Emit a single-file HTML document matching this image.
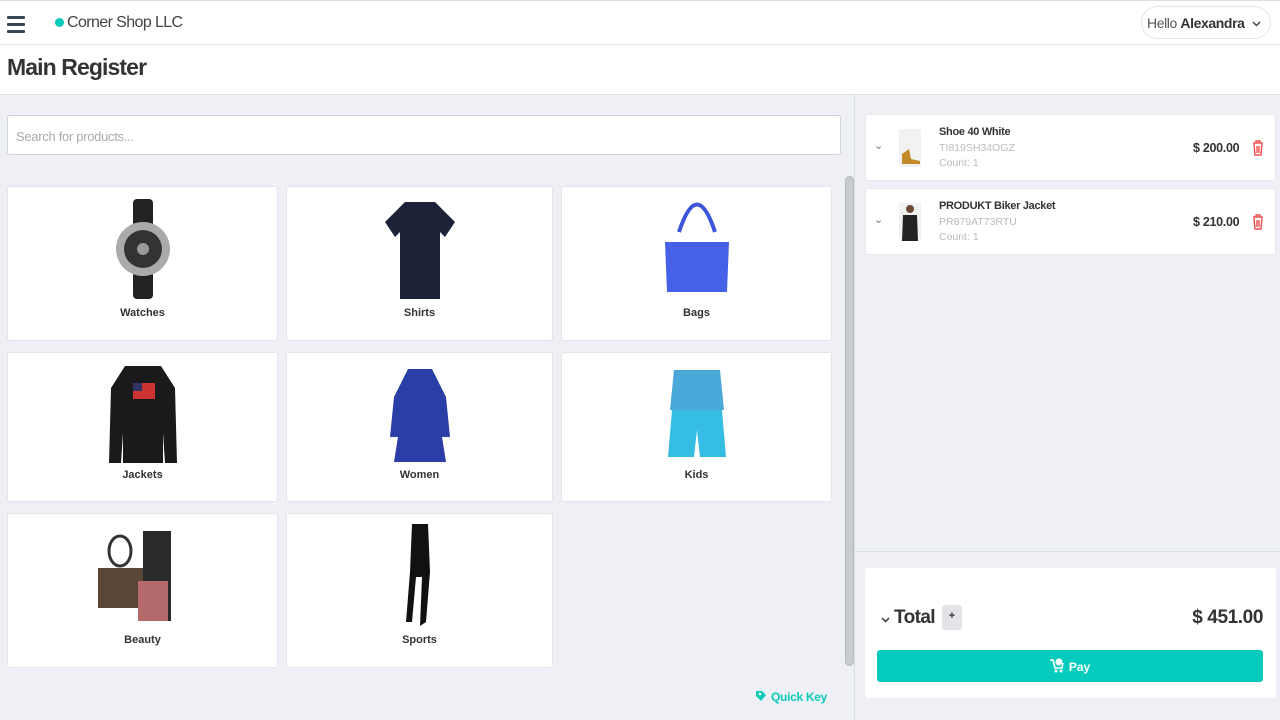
<!DOCTYPE html>
<html><head><meta charset="utf-8"><style>
*{box-sizing:border-box;margin:0;padding:0}
body{width:1280px;height:720px;overflow:hidden;background:#eef0f5;font-family:"Liberation Sans",sans-serif;color:#333;position:relative}
.top{position:absolute;left:0;top:0;width:1280px;height:45px;background:#fff;border-top:1px solid #ddd;border-bottom:1px solid #e2e4e8}
.ham{position:absolute;left:7px;top:15px;width:18px}
.ham i{display:block;height:3px;background:#3a4650;margin-bottom:4px;border-radius:1px}
.dot{position:absolute;left:55px;top:17px;width:9px;height:9px;border-radius:50%;background:#0ccab9}
.shop{position:absolute;left:67px;top:13px;font-size:16px;color:#444;letter-spacing:-.6px}
.hello{position:absolute;left:1141px;top:5px;width:130px;height:33px;border:1px solid #e2e4e8;border-radius:17px;font-size:14px;padding:8px 0 0 5px;color:#555;white-space:nowrap;letter-spacing:-.4px}
.hello b{color:#333}
.title{position:absolute;left:0;top:45px;width:1280px;height:50px;background:#fff;border-bottom:1px solid #dfe2e7}
.title h1{position:absolute;left:7px;top:9px;font-size:23px;font-weight:bold;color:#333;letter-spacing:-.9px}
.search{position:absolute;left:7px;top:115px;width:834px;height:40px;background:#fff;border:1px solid #cfd3da;border-radius:3px;font-size:13px;color:#aaa;padding:13px 8px;letter-spacing:-.3px}
.card{position:absolute;background:#fff;border:1px solid #e3e5ea;border-radius:3px}
.card span{position:absolute;left:0;right:0;text-align:center;font-size:11px;font-weight:bold;color:#333}
.card svg{position:absolute;left:50%;transform:translateX(-50%)}
.sb{position:absolute;left:845px;top:176px;width:9px;height:490px;background:#c8cbd0;border:1px solid #b5b8bd;border-radius:5px}
.div{position:absolute;left:854px;top:95px;width:1px;height:625px;background:#dcdfe4}
.qk{position:absolute;left:755px;top:690px;color:#0ccab9;font-size:12px;font-weight:bold;letter-spacing:-.3px}
.item{position:absolute;left:865px;width:411px;height:67px;background:#fff;border-radius:3px;border:1px solid #e6e8ec}
.item .nm{position:absolute;left:73px;top:11px;font-size:11px;font-weight:bold;color:#333;letter-spacing:-.3px}
.item .sk{position:absolute;left:73px;top:27px;font-size:10.5px;color:#bbb}
.item .ct{position:absolute;left:73px;top:42px;font-size:10.5px;color:#bbb}
.item .pr{position:absolute;left:327px;top:26px;font-size:12.5px;font-weight:bold;color:#333;letter-spacing:-.3px}
.item .ch{position:absolute;left:8px;top:24px;font-size:11px;color:#777}
.hr{position:absolute;left:855px;top:551px;width:425px;height:1px;background:#dcdfe4}
.tot{position:absolute;left:865px;top:568px;width:411px;height:130px;background:#fff;border-radius:3px}
.pay{position:absolute;left:12px;top:82px;width:386px;height:32px;background:#05cbbd;border-radius:3px;color:#fff;font-weight:bold;font-size:12px;text-align:center;padding-top:8px}
</style></head><body>
<div class="top"><div class="ham"><i></i><i></i><i></i></div><div class="dot"></div><div class="shop">Corner Shop LLC</div>
<div class="hello">Hello <b>Alexandra</b> <svg width="9" height="6" style="margin-left:4px;vertical-align:1px"><path d="M1 1l3.5 3.5L8 1" stroke="#444" stroke-width="1.5" fill="none"/></svg></div></div>
<div class="title"><h1>Main Register</h1></div>
<div class="search">Search for products...</div>

<div class="card" style="left:7px;top:186px;width:271px;height:155px"><svg style="top:12px" width="70" height="100"><rect x="25" y="0" width="20" height="100" rx="4" fill="#222"/><circle cx="35" cy="50" r="27" fill="#aaa"/><circle cx="35" cy="50" r="19" fill="#333"/><circle cx="35" cy="50" r="6" fill="#999"/></svg><span style="top:120px">Watches</span></div>
<div class="card" style="left:286px;top:186px;width:267px;height:155px"><svg style="top:10px" width="80" height="105"><path d="M25 5 L55 5 L75 25 L65 40 L60 35 L60 102 L20 102 L20 35 L15 40 L5 25 Z" fill="#1d2238"/></svg><span style="top:120px">Shirts</span></div>
<div class="card" style="left:561px;top:186px;width:271px;height:155px"><svg style="top:10px" width="80" height="100"><path d="M22 35 Q40 -20 58 35" stroke="#3b54d8" stroke-width="4" fill="none"/><path d="M8 45 L72 45 L70 95 L10 95 Z" fill="#4660e8"/></svg><span style="top:120px">Bags</span></div>
<div class="card" style="left:7px;top:352px;width:271px;height:150px"><svg style="top:10px" width="80" height="102"><path d="M22 3 L58 3 L72 25 L74 100 L62 100 L60 70 L60 100 L20 100 L20 70 L18 100 L6 100 L8 25 Z" fill="#1a1a1a"/><rect x="30" y="20" width="22" height="16" fill="#c33"/><rect x="30" y="20" width="9" height="8" fill="#336"/></svg><span style="top:116px">Jackets</span></div>
<div class="card" style="left:286px;top:352px;width:267px;height:150px"><svg style="top:14px" width="80" height="98"><path d="M28 2 L52 2 L66 30 L70 70 L62 70 L66 95 L14 95 L18 70 L10 70 L14 30 Z" fill="#2b3ea8"/></svg><span style="top:116px">Women</span></div>
<div class="card" style="left:561px;top:352px;width:271px;height:150px"><svg style="top:12px" width="70" height="98"><path d="M12 5 L58 5 L62 45 L8 45 Z" fill="#4aa9d8"/><path d="M10 45 L60 45 L64 92 L38 92 L35 65 L32 92 L6 92 Z" fill="#35bde4"/></svg><span style="top:116px">Kids</span></div>
<div class="card" style="left:7px;top:513px;width:271px;height:155px"><svg style="top:12px" width="90" height="100"><ellipse cx="22" cy="25" rx="11" ry="15" fill="none" stroke="#333" stroke-width="3"/><rect x="0" y="42" width="45" height="40" fill="#5a4636"/><rect x="45" y="5" width="28" height="90" fill="#2a2a2a"/><rect x="40" y="55" width="30" height="40" fill="#b46a6a"/></svg><span style="top:120px">Beauty</span></div>
<div class="card" style="left:286px;top:513px;width:267px;height:155px"><svg style="top:8px" width="40" height="108"><path d="M12 2 L28 2 L30 50 L26 100 L20 104 L22 55 L16 55 L12 100 L6 100 L10 50 Z" fill="#111"/></svg><span style="top:120px">Sports</span></div>

<div class="sb"></div><div class="div"></div>
<div class="qk"><svg width="12" height="12" style="vertical-align:-1px;margin-right:4px"><path d="M1 1 L7 1 L11 5 L6 11 L1 6 Z" fill="#0ccab9"/><circle cx="5" cy="4" r="1.3" fill="#fff"/></svg>Quick Key</div>

<div class="item" style="top:114px"><div class="ch">&#8964;</div><svg style="position:absolute;left:33px;top:14px" width="22" height="38"><rect width="22" height="38" fill="#f2f2f2"/><path d="M3 25 L10 20 L12 30 L21 32 L21 35 L3 35 Z" fill="#c48a2a"/></svg><div class="nm">Shoe 40 White</div><div class="sk">TI819SH34OGZ</div><div class="ct">Count: 1</div><div class="pr">$ 200.00</div><svg style="position:absolute;left:386px;top:25px" width="12" height="16"><path d="M1 3h10M4 3V1h4v2M2 4l1 11h6l1-11M5 6v7M7 6v7" stroke="#f0504f" stroke-width="1.4" fill="none"/></svg></div>
<div class="item" style="top:188px"><div class="ch">&#8964;</div><svg style="position:absolute;left:33px;top:14px" width="22" height="38"><rect width="22" height="38" fill="#f2f2f2"/><circle cx="11" cy="6" r="4" fill="#6b4a3a"/><path d="M4 12 L18 12 L19 38 L3 38 Z" fill="#222"/></svg><div class="nm">PRODUKT Biker Jacket</div><div class="sk">PR879AT73RTU</div><div class="ct">Count: 1</div><div class="pr">$ 210.00</div><svg style="position:absolute;left:386px;top:25px" width="12" height="16"><path d="M1 3h10M4 3V1h4v2M2 4l1 11h6l1-11M5 6v7M7 6v7" stroke="#f0504f" stroke-width="1.4" fill="none"/></svg></div>
<div class="hr"></div>
<div class="tot">
<svg style="position:absolute;left:16px;top:49px" width="9" height="6"><path d="M1 1l3.5 3.5L8 1" stroke="#333" stroke-width="1.5" fill="none"/></svg>
<div style="position:absolute;left:29px;top:39px;font-size:19px;font-weight:bold;color:#333;letter-spacing:-.6px">Total</div>
<div style="position:absolute;left:77px;top:37px;width:20px;height:25px;background:#e3e4e8;border-radius:3px;font-size:11px;text-align:center;padding-top:5px;font-weight:bold">+</div>
<div style="position:absolute;right:13px;top:39px;font-size:19px;font-weight:bold;color:#333;letter-spacing:-.4px">$ 451.00</div>
<div class="pay"><svg width="14" height="15" style="vertical-align:-2px;margin-right:5px"><path d="M0 2h3l2 8h7l1-5" stroke="#fff" stroke-width="1.6" fill="none"/><circle cx="9" cy="4" r="3.5" fill="#fff"/><circle cx="6" cy="13" r="1.5" fill="#fff"/><circle cx="11" cy="13" r="1.5" fill="#fff"/></svg>Pay</div>
</div>
</body></html>
